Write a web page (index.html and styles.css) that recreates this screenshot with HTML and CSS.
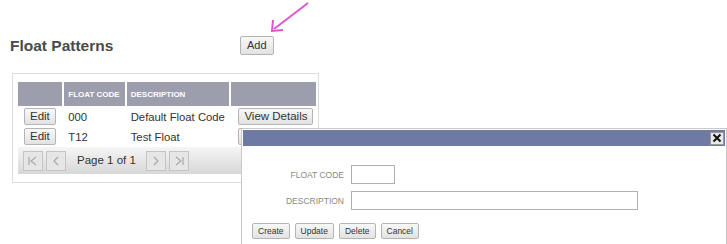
FILE: index.html
```html
<!DOCTYPE html>
<html lang="en">
<head>
    <meta charset="UTF-8">
    <title>Float Patterns</title>
    <link rel="stylesheet" href="styles.css">
</head>
<body>
    <div class="page-head">
        <h1>Float Patterns</h1>
        <button class="btn add-btn">Add</button>
        <svg class="arrow" width="44" height="34" viewBox="0 0 44 34">
            <line x1="40" y1="2" x2="6" y2="28" stroke="#e055d0" stroke-width="2"/>
            <polyline points="5,19 4,30 15,29" fill="none" stroke="#e055d0" stroke-width="2"/>
        </svg>
    </div>

    <div class="panel">
        <table class="grid">
            <colgroup>
                <col class="c1"><col class="c2"><col class="c3"><col class="c4">
            </colgroup>
            <thead>
                <tr>
                    <th></th>
                    <th>FLOAT CODE</th>
                    <th>DESCRIPTION</th>
                    <th></th>
                </tr>
            </thead>
            <tbody>
                <tr>
                    <td><button class="btn">Edit</button></td>
                    <td>000</td>
                    <td>Default Float Code</td>
                    <td><button class="btn">View Details</button></td>
                </tr>
                <tr>
                    <td><button class="btn">Edit</button></td>
                    <td>T12</td>
                    <td>Test Float</td>
                    <td><button class="btn">View Details</button></td>
                </tr>
                <tr>
                    <td colspan="4" class="pager">
                        <div class="pager-row">
                            <span class="pg-btn">
                                <svg width="12" height="12" viewBox="0 0 12 12"><path d="M2 2v8M9 2L4 6l5 4" fill="none" stroke="#a8a8a8" stroke-width="1.2"/></svg>
                            </span>
                            <span class="pg-btn">
                                <svg width="12" height="12" viewBox="0 0 12 12"><path d="M8 2L4 6l4 4" fill="none" stroke="#a8a8a8" stroke-width="1.2"/></svg>
                            </span>
                            <span class="pg-label">Page 1 of 1</span>
                            <span class="pg-btn">
                                <svg width="12" height="12" viewBox="0 0 12 12"><path d="M4 2l4 4-4 4" fill="none" stroke="#a8a8a8" stroke-width="1.2"/></svg>
                            </span>
                            <span class="pg-btn">
                                <svg width="12" height="12" viewBox="0 0 12 12"><path d="M3 2l5 4-5 4M10 2v8" fill="none" stroke="#a8a8a8" stroke-width="1.2"/></svg>
                            </span>
                        </div>
                    </td>
                </tr>
            </tbody>
        </table>
    </div>

    <div class="dialog">
        <div class="dialog-title">
            <span class="close">
                <svg width="10" height="10" viewBox="0 0 10 10"><path d="M1.5 1.5l7 7M8.5 1.5l-7 7" stroke="#111" stroke-width="2"/></svg>
            </span>
        </div>
        <div class="dialog-body">
            <div class="field">
                <label for="code">FLOAT CODE</label>
                <input type="text" id="code" class="in-code">
            </div>
            <div class="field">
                <label for="desc">DESCRIPTION</label>
                <input type="text" id="desc" class="in-desc">
            </div>
            <div class="actions">
                <button class="btn small">Create</button>
                <button class="btn small">Update</button>
                <button class="btn small">Delete</button>
                <button class="btn small">Cancel</button>
            </div>
        </div>
    </div>
</body>
</html>
```
FILE: styles.css
```css
* {
    margin: 0;
    padding: 0;
    box-sizing: border-box;
}

body {
    background: #fff;
    font-family: "Liberation Sans", Arial, sans-serif;
    color: #333;
    width: 727px;
    height: 244px;
    overflow: hidden;
    position: relative;
}

.page-head {
    display: flex;
    align-items: flex-start;
    padding: 36px 0 0 10px;
    height: 73px;
    position: relative;
}

h1 {
    font-size: 15.5px;
    font-weight: bold;
    color: #4a4a4a;
    width: 230px;
    padding-top: 1px;
}

.arrow {
    position: absolute;
    left: 268px;
    top: 1px;
}

.btn {
    font-family: "Liberation Sans", Arial, sans-serif;
    font-size: 11.5px;
    color: #333;
    background: linear-gradient(#f8f8f8, #e2e2e2);
    border: 1px solid #b4b4b4;
    border-radius: 2px;
    height: 17px;
    padding: 0 5px;
    line-height: 15px;
    white-space: nowrap;
}

.add-btn {
    font-size: 11px;
    height: 19px;
    padding: 0 6px;
}

.panel {
    margin-left: 12px;
    width: 307px;
    height: 110px;
    border: 1px solid #dcdcdc;
    padding: 7px 0 0 3px;
}

.grid {
    border-collapse: separate;
    border-spacing: 2px 1px;
    table-layout: fixed;
    width: 302px;
    font-size: 11.3px;
}

.c1 { width: 44px; }
.c2 { width: 60px; }
.c3 { width: 102px; }
.c4 { width: 84px; }

.grid th {
    background: #9c9eae;
    color: #fff;
    font-size: 8px;
    font-weight: bold;
    text-align: left;
    height: 24px;
    padding: 0 4px;
    white-space: nowrap;
    overflow: hidden;
}

.grid td {
    height: 19px;
    padding: 0 0 0 4px;
    color: #333;
    white-space: nowrap;
}

.grid td:first-child {
    padding-left: 6px;
}

.grid td:last-child {
    padding-left: 7px;
}

.grid td.pager {
    padding: 0 0 0 5px;
    height: 27px;
    background: linear-gradient(#f5f5f5, #d7d7d7);
}

.pager-row {
    display: flex;
    align-items: center;
    gap: 3px;
}

.pg-btn {
    width: 20px;
    height: 20px;
    border: 1px solid #c4c4c4;
    background: #e6e6e6;
    display: flex;
    align-items: center;
    justify-content: center;
}

.pg-label {
    font-size: 11.5px;
    color: #333;
    padding: 0 7px 0 8px;
    white-space: nowrap;
    position: relative;
    top: -1px;
}

.dialog {
    position: absolute;
    left: 241px;
    top: 128px;
    width: 486px;
    height: 116px;
    background: #fff;
    border: 1px solid #c8c8c8;
    border-bottom: none;
    padding: 1px;
}

.dialog-title {
    height: 16px;
    background: #6f7aa2;
    display: flex;
    justify-content: flex-end;
    align-items: center;
    padding-right: 1px;
}

.close {
    width: 14px;
    height: 13px;
    background: #e8e8e8;
    border: 1px solid #9a9a9a;
    display: flex;
    align-items: center;
    justify-content: center;
}

.dialog-body {
    padding: 19px 0 0 8px;
}

.field {
    display: flex;
    align-items: center;
    margin-bottom: 7px;
}

.field label {
    width: 93px;
    text-align: right;
    font-size: 8.5px;
    color: #888;
    margin-right: 7px;
}

.field input {
    height: 19px;
    border: 1px solid #b0b0b0;
    background: #fff;
}

.in-code {
    width: 44px;
}

.in-desc {
    width: 287px;
}

.actions {
    display: flex;
    gap: 5px;
    margin-top: 13px;
    padding-left: 1px;
}

.btn.small {
    font-size: 8.5px;
    height: 16px;
    padding: 0 5px;
}
```
